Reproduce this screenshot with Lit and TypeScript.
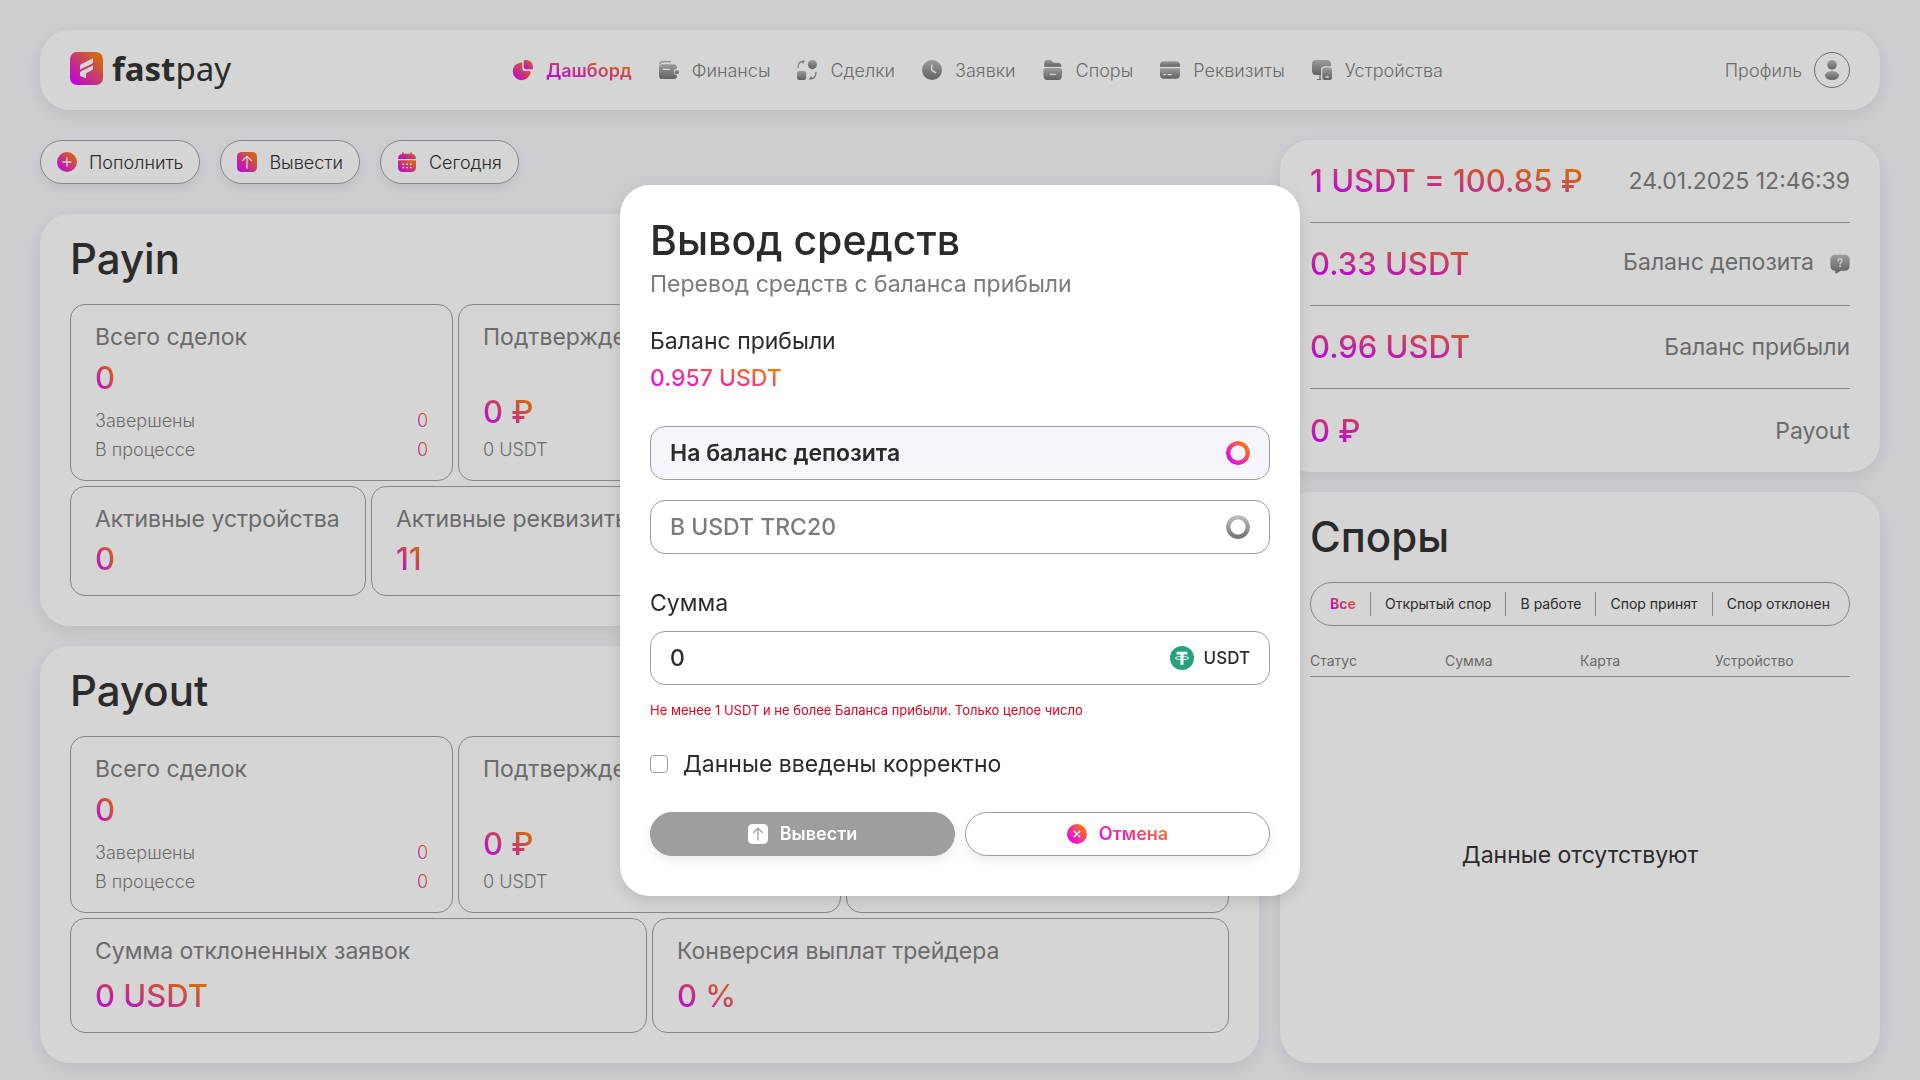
import { LitElement, html, svg, css, nothing } from "lit";
import type { TemplateResult, SVGTemplateResult } from "lit";
import { customElement, property, state } from "lit/decorators.js";
import { classMap } from "lit/directives/class-map.js";

const ICONS: Record<string, { box: string; art: SVGTemplateResult }> = {
  dashboard: {
    box: "0 0 20 20",
    art: svg`
      <path fill="url(#g)" d="M8 2.4c.8-.1 1.300.4 1.300 1.200v5.400a2 2 0 0 0 2 2h5.200c.8 0 1.300.5 1.200 1.300A9 8.900 0 1 1 8 2.400z"/>
      <path fill="url(#g)" d="M12.200 0h1.300A7.300 7.300 0 0 1 20 6.600v1.300c0 .8-.6 1.400-1.400 1.400h-5.400a2.400 2.400 0 0 1-2.400-2.400V1.400C10.800.6 11.400 0 12.200 0z"/>`,
  },
  finance: {
    box: "0 0 20 20",
    art: svg`
      <path d="M.8 3.800C1.200 2.200 2.200 1.600 4 1.600h7.600" fill="none" stroke="#a8a8a8" stroke-width="1.300" stroke-linecap="round"/>
      <path fill="url(#g)" d="M3.200 4.300h11.600c1.800 0 3.200 1.300 3.200 3.200v1.300h-.6a3.200 3.200 0 0 0 0 6.300h.6v.8c0 1.900-1.400 3.200-3.200 3.200H3.200C1.400 19.100 0 17.800 0 15.900V7.500C0 5.600 1.400 4.300 3.200 4.300z"/>
      <path d="M4.300 9.400h6" stroke="#fff" stroke-width="1.200" stroke-linecap="round"/>
      <rect fill="url(#g)" x="15.500" y="9.900" width="4.500" height="4.200" rx="1.800"/>`,
  },
  deals: {
    box: "0 0 20 20",
    art: svg`
      <circle fill="url(#g)" cx="15.400" cy="4.600" r="4.600"/>
      <rect fill="url(#g)" y="11" width="9.200" height="9" rx="2.300"/>
      <path d="M1 7.500C1 3.500 3.400 1.300 7 1.200L5.800 3" fill="none" stroke="#8f8f8f" stroke-width="1.200" stroke-linecap="round"/>
      <path d="M19 12.500c0 4-2.400 6.200-6 6.300l1.200-1.800" fill="none" stroke="#777" stroke-width="1.200" stroke-linecap="round"/>`,
  },
  clock: {
    box: "0 0 20 20",
    art: svg`
      <circle fill="url(#g)" cx="10" cy="10" r="10"/>
      <path d="M9.700 5.200v4.300c0 .6.2.9.7 1.200l3.100 1.900" fill="none" stroke="#fff" stroke-width="1.500" stroke-linecap="round"/>`,
  },
  folder: {
    box: "0 0 20 20",
    art: svg`
      <path fill="url(#g)" d="M1.300 6.700V3C1.300 1.200 2.500 0 4.200 0h2.500c1 0 1.600.3 2.200 1l.8 1.100c.4.500.8.7 1.400.7h3.700c2.200 0 3.600 1.500 3.700 3.900z"/>
      <path fill="url(#g)" d="M3.500 8h12.600c2.200 0 3.400 1.400 3.200 3.500l-.5 5.300c-.2 2-1.300 3.200-3.300 3.200H3.900C2 20 .8 18.800.600 16.800L.2 11.500C0 9.400 1.300 8 3.500 8z"/>
      <path d="M7.200 14.400h5" stroke="#fff" stroke-width="1.200" stroke-linecap="round"/>`,
  },
  card: {
    box: "0 0 20 20",
    art: svg`
      <path fill="url(#g)" d="M0 6.700V5c0-2.400 1.500-3.800 3.800-3.800h12.400C18.500 1.200 20 2.600 20 5v1.700z"/>
      <path fill="url(#g)" d="M0 8.200h20V15c0 2.400-1.500 3.800-3.800 3.800H3.800C1.500 18.800 0 17.400 0 15z"/>
      <path d="M3.800 14.600h1.800M8 14.600h3.200" stroke="#fff" stroke-width="1.200" stroke-linecap="round"/>`,
  },
  devices: {
    box: "0 0 20 20",
    art: svg`
      <path fill="url(#g)" d="M4 0h10.500C17 0 19 1.600 19 4v2.200h-6.400c-2.200 0-3.500 1.300-3.500 3.500V15H4c-2.400 0-4-1.600-4-4V4c0-2.400 1.600-4 4-4z"/>
      <path d="M5.600 19.500h3.200M8 15v4.200" stroke="#777" stroke-width="1.200" stroke-linecap="round"/>
      <rect fill="url(#g)" x="10.300" y="7.400" width="9.700" height="12.600" rx="2.500"/>
      <path d="M14 17h2.400" stroke="#fff" stroke-width="1.300" stroke-linecap="round"/>`,
  },
  user: {
    box: "0 0 20 20",
    art: svg`
      <circle fill="url(#g)" cx="10" cy="4.800" r="4.800"/>
      <ellipse fill="url(#g)" cx="10" cy="15.500" rx="7" ry="4.500"/>`,
  },
  question: {
    box: "0 0 20 20",
    art: svg`
      <path fill="url(#g)" d="M5 .8h10c2.700 0 4.600 1.900 4.600 4.600v6.800c0 2.700-1.900 4.600-4.600 4.600h-4.400l-3.800 2.400c-.8.500-1.500.1-1.500-.8v-1.600C2.200 16.700.4 14.900.4 12.200V5.400C.4 2.700 2.300.8 5 .8z"/>
      <path d="M8.100 6.700c0-1.200.9-1.900 2-1.900s2 .7 2 1.800c0 1.500-2 1.600-2 3.200" fill="none" stroke="#fff" stroke-width="1.300" stroke-linecap="round"/>
      <circle cx="10.100" cy="12.200" r=".9" fill="#fff"/>`,
  },
  plus: {
    box: "0 0 20 20",
    art: svg`
      <circle fill="url(#g)" cx="10" cy="10" r="10"/>
      <path d="M10 6v8M6 10h8" stroke="#fff" stroke-width="1.300" stroke-linecap="round"/>`,
  },
  up: {
    box: "0 0 20 20",
    art: svg`
      <rect fill="url(#g)" width="20" height="20" rx="4.500"/>
      <path class="cut" d="M10 16V4.500M5.500 8.600L10 4.200l4.500 4.400" fill="none" stroke-width="1.300" stroke-linecap="round" stroke-linejoin="round"/>`,
  },
  calendar: {
    box: "0 0 20 20",
    art: svg`
      <path fill="url(#g)" d="M1 6.900C1.100 3.700 2.600 2 5.200 1.900V.600c0-.8 1.400-.8 1.400 0v1.200h6.800V.600c0-.8 1.400-.8 1.400 0v1.300C17.400 2 18.900 3.700 19 6.900z"/>
      <path fill="url(#g)" d="M1 8.300h18v6.600c0 3.200-1.700 5.100-5 5.100H6c-3.300 0-5-1.900-5-5.100z"/>
      <path d="M6.200 12.200h.1M10 12.200h.1M13.700 12.200h.1M6.200 15.600h.1M10 15.600h.1M13.700 15.600h.1" stroke="#fff" stroke-width="1.700" stroke-linecap="round"/>`,
  },
  cross: {
    box: "0 0 20 20",
    art: svg`
      <circle fill="url(#g)" cx="10" cy="10" r="10"/>
      <path d="M7.200 7.200l5.600 5.600M12.800 7.200l-5.600 5.600" stroke="#fff" stroke-width="1.300" stroke-linecap="round"/>`,
  },
  logo: {
    box: "0 0 33 33",
    art: svg`
      <rect fill="url(#g)" width="33" height="33" rx="7"/>
      <path fill="#fff" d="M10 14.400c0-1.200.4-1.900 1.500-2.400L23 6.200v3.300c0 1.200-.4 1.900-1.500 2.400L10 17.500z"/>
      <path fill="#fff" d="M10 21.300c0-1.100.4-1.700 1.500-2.300L23 13.500v2.600c0 1.200-.4 1.900-1.500 2.400l-5.400 2.700v5L10 24z"/>`,
  },
  tether: {
    box: "0 0 24 24",
    art: svg`
      <circle fill="#26a17b" cx="12" cy="12" r="12"/>
      <path fill="#fff" d="M6.600 5.800h10.800v2.800h-3.900v10.200h-3V8.600H6.600z"/>
      <ellipse cx="12" cy="12.100" rx="6.800" ry="1.600" fill="none" stroke="#fff" stroke-width=".9"/>`,
  },
};

@customElement("fp-icon")
class FpIcon extends LitElement {
  static styles = css`
    :host { display: block; width: 20px; height: 20px; flex: none; }
    .art { display: block; width: 100%; height: 100%; overflow: visible; }
    .cut { stroke: var(--cut, #fff); }
  `;
  @property() name = "";
  @property() tone: "brand" | "grey" | "white" = "grey";

  private gradient(): SVGTemplateResult {
    if (this.tone === "brand")
      return svg`<linearGradient id="g" x1="0" y1="1" x2="1" y2="0"><stop offset=".1" stop-color="#e100ff"/><stop offset=".9" stop-color="#ff7a00"/></linearGradient>`;
    if (this.tone === "white")
      return svg`<linearGradient id="g"><stop stop-color="#fff"/></linearGradient>`;
    return svg`<linearGradient id="g" x1="0" y1="0" x2="0" y2="1"><stop offset="0" stop-color="#b8b8b8"/><stop offset="1" stop-color="#6e6e6e"/></linearGradient>`;
  }

  render() {
    const icon = ICONS[this.name];
    if (!icon) return nothing;
    return html`<svg class="art" viewBox=${icon.box} aria-hidden="true"><defs>${this.gradient()}</defs>${icon.art}</svg>`;
  }
}

interface Tile {
  label: string;
  value: string;
  note?: string;
  rows?: [string, string][];
}

const NAV: [string, string][] = [
  ["dashboard", "Дашборд"],
  ["finance", "Финансы"],
  ["deals", "Сделки"],
  ["clock", "Заявки"],
  ["folder", "Споры"],
  ["card", "Реквизиты"],
  ["devices", "Устройства"],
];

const ACTIONS: [string, string][] = [
  ["plus", "Пополнить"],
  ["up", "Вывести"],
  ["calendar", "Сегодня"],
];

const TOTAL: Tile = {
  label: "Всего сделок",
  value: "0",
  rows: [["Завершены", "0"], ["В процессе", "0"]],
};
const CONFIRMED: Tile = { label: "Подтверждено", value: "0 ₽", note: "0 USDT" };

const BALANCES: [string, string, boolean][] = [
  ["1 USDT = 100.85 ₽", "24.01.2025 12:46:39", false],
  ["0.33 USDT", "Баланс депозита", true],
  ["0.96 USDT", "Баланс прибыли", false],
  ["0 ₽", "Payout", false],
];

const FILTERS = ["Все", "Открытый спор", "В работе", "Спор принят", "Спор отклонен"];
const COLUMNS = ["Статус", "Сумма", "Карта", "Устройство"];

@customElement("app-root")
class AppRoot extends LitElement {
  static styles = css`
    :host {
      --ink: #2b2b2b;
      --muted: #7b7b7b;
      --line: #9d9d9d;
      --brand: linear-gradient(to top right, #e100ff 12%, #ff7a00 88%);
      display: block;
      font-family: Inter, "Liberation Sans", sans-serif;
      color: var(--ink);
    }
    * { box-sizing: border-box; }
    h1, h2, p { margin: 0; font-weight: inherit; }
    button, input { font: inherit; color: inherit; margin: 0; }
    button { cursor: pointer; }

    .page {
      display: flex;
      flex-direction: column;
      gap: 30px;
      min-height: 100vh;
      padding: 30px 40px 17px;
      background: #f6f5fb;
    }
    .card {
      background: #fff;
      border-radius: 30px;
      box-shadow: 0 5px 15px rgba(43, 43, 43, 0.1);
    }

    .header {
      display: flex;
      align-items: center;
      justify-content: space-between;
      height: 80px;
      padding: 0 30px;
      font-size: 18px;
      color: var(--muted);
    }
    .link { color: inherit; text-decoration: none; display: flex; align-items: center; }
    .logo { gap: 9px; padding-bottom: 3px; color: var(--ink); font: 400 33px/40px "Noto Sans", sans-serif; }
    .logo b { font-weight: 700; }
    .mark { width: 33px; height: 33px; }
    .nav { display: flex; gap: 27px; font-weight: 300; }
    .nav .link { gap: 13px; }
    .nav .current { font-weight: 600; }
    .profile { gap: 12px; font-weight: 300; }
    .avatar {
      display: grid;
      place-items: center;
      width: 36px;
      height: 36px;
      border: 1px solid var(--muted);
      border-radius: 50%;
    }

    .main { flex: 1; display: grid; grid-template-columns: minmax(0, 1fr) 600px; gap: 21px; }
    .left { display: flex; flex-direction: column; gap: 20px; }
    .right { display: flex; flex-direction: column; gap: 20px; }
    .actions { display: flex; gap: 20px; margin-bottom: 10px; }
    .pill {
      display: flex;
      align-items: center;
      justify-content: center;
      gap: 12px;
      height: 44px;
      padding: 0 16px;
      border: 1px solid var(--line);
      border-radius: 22px;
      background: #fff;
      font-size: 18px;
      font-weight: 300;
      box-shadow: 0 5px 10px rgba(43, 43, 43, 0.08);
    }
    .title { font-size: 42px; line-height: 46px; font-weight: 500; margin-bottom: 22px; }

    .stats { padding: 22px 30px 30px; }
    .tiles { display: flex; gap: 5px; }
    .tiles + .tiles { margin-top: 5px; }
    .tile {
      flex: 1 1 0;
      display: flex;
      flex-direction: column;
      justify-content: space-between;
      min-height: 110px;
      padding: 20px 24px 18px;
      border: 1px solid var(--line);
      border-radius: 15px;
      color: var(--muted);
      white-space: nowrap;
    }
    .tall .tile { min-height: 177px; }
    .mid .tile { min-height: 115px; }
    .tile.narrow { flex: 0 0 296px; }
    .label { font-size: 23px; line-height: 24px; }
    .value { font-size: 31px; line-height: 32px; font-weight: 500; align-self: flex-start; }
    .tile .value { margin-bottom: 2px; }
    .figures { display: flex; flex-direction: column; gap: 8px; }
    .note, .row { font-size: 18px; line-height: 24px; font-weight: 300; }
    .rows { display: flex; flex-direction: column; gap: 5px; }
    .row { display: flex; justify-content: space-between; }

    .balances { padding: 0 30px; }
    .balance {
      display: flex;
      align-items: center;
      justify-content: space-between;
      height: 83px;
      border-bottom: 1px solid var(--line);
    }
    .balance:last-child { border-bottom: 0; }
    .balance .value { align-self: center; min-width: 270px; }
    .about { display: flex; align-items: center; gap: 16px; color: var(--muted); }
    .hinted { padding-bottom: 4px; }
    .hint { margin-top: 4px; }

    .disputes { flex: 1; display: flex; flex-direction: column; padding: 22px 30px 30px; }
    .filters {
      display: flex;
      align-items: center;
      justify-content: space-between;
      height: 44px;
      padding: 0 19px;
      border: 1px solid var(--line);
      border-radius: 22px;
      margin-bottom: 25px;
    }
    .filter { border: 0; padding: 0; background: none; font-size: 14px; line-height: 24px; }
    .filter.current { font-weight: 700; }
    .bar { width: 1px; height: 24px; background: var(--line); }
    .table { flex: 1; display: flex; flex-direction: column; color: var(--muted); }
    .head { display: block; border-bottom: 1px solid var(--line); padding-bottom: 5px; }
    .cells { display: grid; grid-template-columns: repeat(4, 1fr); }
    .cell { padding: 0; text-align: left; font-size: 14px; line-height: 20px; font-weight: 400; }
    .body { flex: 1; display: flex; }
    .none { flex: 1; display: flex; }
    .empty {
      flex: 1;
      display: grid;
      place-items: center;
      padding: 0;
      color: var(--ink);
      font-size: 23px;
    }

    .overlay {
      position: fixed;
      inset: 0;
      display: grid;
      place-items: center;
      background: rgba(43, 43, 43, 0.2);
    }
    .modal {
      display: flex;
      flex-direction: column;
      width: 680px;
      max-width: 100%;
      padding: 30px 30px 40px;
      background: #fff;
      border-radius: 30px;
      box-shadow: 0 5px 15px rgba(43, 43, 43, 0.15);
      font-size: 23px;
      line-height: 28px;
    }
    .heading { font-size: 41px; line-height: 50px; font-weight: 500; }
    .sub { margin-top: 5px; color: var(--muted); }
    .caption { margin-top: 29px; }
    .amount { margin-top: 9px; align-self: flex-start; font-weight: 500; }
    .options { display: flex; flex-direction: column; gap: 20px; margin: 34px 0 0; padding: 0; border: 0; }
    .field {
      display: flex;
      align-items: center;
      justify-content: space-between;
      gap: 10px;
      height: 54px;
      padding: 0 19px;
      border: 1px solid var(--line);
      border-radius: 15px;
      color: var(--muted);
      font-weight: 500;
    }
    .field.chosen { background: #f6f5fb; color: var(--ink); font-weight: 600; }
    .radio {
      appearance: none;
      width: 24px;
      height: 24px;
      border-radius: 50%;
      background: linear-gradient(#c4c4c4, #6e6e6e);
      -webkit-mask: radial-gradient(circle, transparent 7px, #000 8px);
      mask: radial-gradient(circle, transparent 7px, #000 8px);
    }
    .radio:checked { background: var(--brand); }
    .sum { margin: 35px 0 14px; }
    .input { flex: 1; min-width: 0; border: 0; padding: 0; outline: 0; background: none; color: var(--ink); }
    .coin { width: 24px; height: 24px; }
    .unit { font-size: 17px; color: var(--ink); }
    .error { margin-top: 15px; color: #e1001e; font-size: 13px; line-height: 20px; }
    .confirm { display: flex; align-items: center; gap: 15px; margin-top: 30px; }
    .check {
      appearance: none;
      width: 18px;
      height: 18px;
      border: 1px solid var(--line);
      border-radius: 4px;
      background: #fff;
    }
    .check:checked { background: var(--brand); }
    .buttons { display: grid; grid-template-columns: 1fr 1fr; gap: 10px; margin-top: 34px; }
    .buttons .pill { font-weight: 600; }
    .pill.submit { background: #9e9e9e; border-color: #9e9e9e; color: #fff; --cut: #9e9e9e; }

    .grad {
      background: var(--brand);
      -webkit-background-clip: text;
      background-clip: text;
      color: transparent;
    }
  `;

  @state() private target = 0;
  @state() private filter = 0;

  private tile(t: Tile | null, extra = ""): TemplateResult {
    if (!t) return html`<article class="tile"></article>`;
    return html`
      <article class="tile ${extra}">
        <p class="label">${t.label}</p>
        ${t.note
          ? html`<div class="figures"><p class="value grad">${t.value}</p><p class="note">${t.note}</p></div>`
          : html`<p class="value grad">${t.value}</p>`}
        ${t.rows
          ? html`<div class="rows">
              ${t.rows.map(([k, v]) => html`<div class="row"><span>${k}</span><span class="grad">${v}</span></div>`)}
            </div>`
          : nothing}
      </article>`;
  }

  private header() {
    return html`
      <header class="card header">
        <a class="link logo" href="#"><fp-icon class="mark" name="logo" tone="brand"></fp-icon><span><b>fast</b>pay</span></a>
        <nav class="nav">
          ${NAV.map(([icon, text], i) => html`
            <a class=${classMap({ link: true, current: i === 0 })} href="#">
              <fp-icon name=${icon} tone=${i === 0 ? "brand" : "grey"}></fp-icon>
              <span class=${i === 0 ? "grad" : ""}>${text}</span>
            </a>`)}
        </nav>
        <a class="link profile" href="#">Профиль<span class="avatar"><fp-icon name="user"></fp-icon></span></a>
      </header>`;
  }

  private disputes() {
    return html`
      <section class="card disputes">
        <h2 class="title">Споры</h2>
        <div class="filters">
          ${FILTERS.map((name, i) => html`
            ${i ? html`<span class="bar"></span>` : nothing}
            <button
              class=${classMap({ filter: true, current: i === this.filter })}
              @click=${() => (this.filter = i)}
            ><span class=${i === this.filter ? "grad" : ""}>${name}</span></button>`)}
        </div>
        <table class="table">
          <thead class="head">
            <tr class="cells">${COLUMNS.map((c) => html`<th class="cell">${c}</th>`)}</tr>
          </thead>
          <tbody class="body">
            <tr class="none"><td class="empty" colspan="4">Данные отсутствуют</td></tr>
          </tbody>
        </table>
      </section>`;
  }

  private modal() {
    const options = ["На баланс депозита", "В USDT TRC20"];
    return html`
      <div class="overlay">
        <form class="modal" role="dialog" aria-labelledby="heading" @submit=${(e: Event) => e.preventDefault()}>
          <h1 class="heading" id="heading">Вывод средств</h1>
          <p class="sub">Перевод средств с баланса прибыли</p>
          <p class="caption">Баланс прибыли</p>
          <p class="amount grad">0.957 USDT</p>
          <div class="options" role="radiogroup">
            ${options.map((text, i) => html`
              <label class=${classMap({ field: true, chosen: this.target === i })}>
                <span>${text}</span>
                <input class="radio" type="radio" name="target" .checked=${this.target === i} @change=${() => (this.target = i)} />
              </label>`)}
          </div>
          <label class="sum" for="sum">Сумма</label>
          <div class="field">
            <input class="input" id="sum" type="text" inputmode="numeric" value="0" />
            <fp-icon class="coin" name="tether"></fp-icon>
            <span class="unit">USDT</span>
          </div>
          <p class="error">Не менее 1 USDT и не более Баланса прибыли. Только целое число</p>
          <label class="confirm"><input class="check" type="checkbox" /><span>Данные введены корректно</span></label>
          <div class="buttons">
            <button class="pill submit" type="submit"><fp-icon name="up" tone="white"></fp-icon>Вывести</button>
            <button class="pill" type="button"><fp-icon name="cross" tone="brand"></fp-icon><span class="grad">Отмена</span></button>
          </div>
        </form>
      </div>`;
  }

  render() {
    return html`
      <div class="page">
        ${this.header()}
        <main class="main">
          <div class="left">
            <div class="actions">
              ${ACTIONS.map(([icon, text]) => html`
                <button class="pill"><fp-icon name=${icon} tone="brand"></fp-icon>${text}</button>`)}
            </div>
            <section class="card stats">
              <h2 class="title">Payin</h2>
              <div class="tiles tall">${this.tile(TOTAL)}${this.tile(CONFIRMED)}${this.tile(null)}</div>
              <div class="tiles">
                ${this.tile({ label: "Активные устройства", value: "0" }, "narrow")}
                ${this.tile({ label: "Активные реквизиты", value: "11" })}
              </div>
            </section>
            <section class="card stats">
              <h2 class="title">Payout</h2>
              <div class="tiles tall">${this.tile(TOTAL)}${this.tile(CONFIRMED)}${this.tile(null)}</div>
              <div class="tiles mid">
                ${this.tile({ label: "Сумма отклоненных заявок", value: "0 USDT" })}
                ${this.tile({ label: "Конверсия выплат трейдера", value: "0 %" })}
              </div>
            </section>
          </div>
          <div class="right">
            <section class="card balances">
              ${BALANCES.map(([value, text, hint]) => html`
                <div class="balance">
                  <span class="value grad">${value}</span>
                  <span class=${classMap({ label: true, about: true, hinted: hint })}>${text}${hint ? html`<fp-icon class="hint" name="question"></fp-icon>` : nothing}</span>
                </div>`)}
            </section>
            ${this.disputes()}
          </div>
        </main>
      </div>
      ${this.modal()}`;
  }
}
